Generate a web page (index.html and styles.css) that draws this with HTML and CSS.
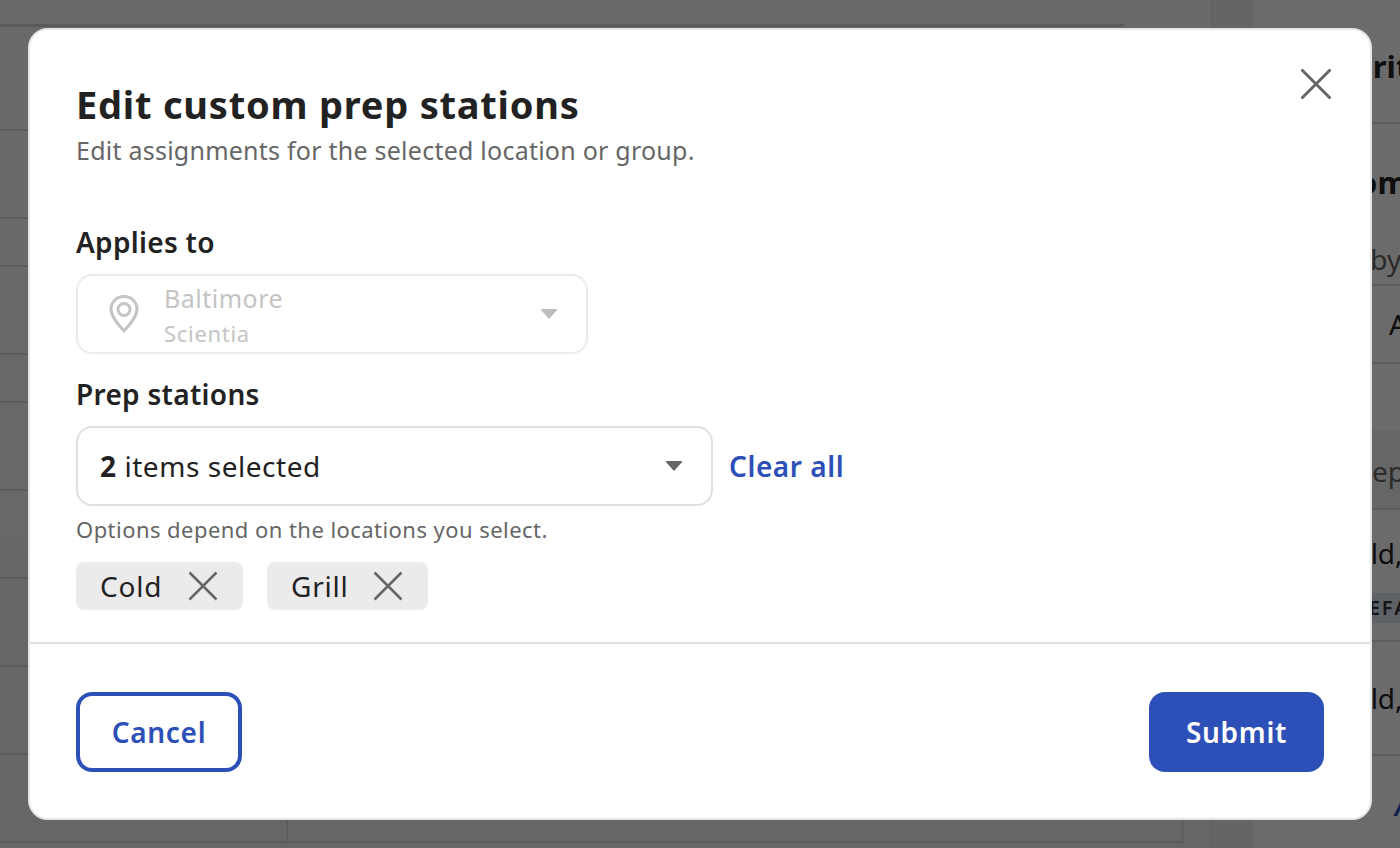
FILE: index.html
```html
<!DOCTYPE html>
<html lang="en">
<head>
<meta charset="utf-8">
<title>Edit custom prep stations</title>
<link rel="stylesheet" href="styles.css">
</head>
<body>
<div class="page">
  <main class="main">
    <div class="top-space"><div class="top-rule"></div></div>
    <div class="table">
      <div class="row tall"><div class="cell-a"></div><div class="cell-b"></div></div>
      <div class="row short"><div class="cell-a"></div><div class="cell-b"></div></div>
      <div class="row tall"><div class="cell-a"></div><div class="cell-b"></div></div>
      <div class="row short"><div class="cell-a"></div><div class="cell-b"></div></div>
      <div class="row tall"><div class="cell-a"></div><div class="cell-b"></div></div>
      <div class="row tall"><div class="cell-a"></div><div class="cell-b"></div></div>
      <div class="row tall"><div class="cell-a"></div><div class="cell-b"></div></div>
      <div class="row tall"><div class="cell-a"></div><div class="cell-b"></div></div>
      <div class="row tall"><div class="cell-a"></div><div class="cell-b"></div></div>
    </div>
  </main>
  <div class="gutter"></div>
  <aside class="side">
    <div class="side-row s1"><span class="side-title">Priority</span></div>
    <div class="side-row s2"><span class="side-title">Custom</span></div>
    <div class="side-row s3"><span class="side-muted">Sorted by</span></div>
    <div class="side-row s4"><span class="side-text">All</span></div>
    <div class="side-row s5"><span class="side-muted">Prep</span></div>
    <div class="side-row s6"><span class="side-text">Cold,</span><span class="side-chip">DEFAULT</span></div>
    <div class="side-row s7"><span class="side-text">Cold,</span></div>
    <div class="side-row s8"><span class="side-link">All</span></div>
  </aside>
</div>
<div class="scrim"></div>
<section class="modal">
  <button class="close" aria-label="Close">
    <svg viewBox="0 0 30 30" width="30" height="30"><path d="M1.500 1.500 28.500 28.500M28.500 1.500 1.500 28.500"/></svg>
  </button>
  <header class="head">
    <h1 class="title">Edit custom prep stations</h1>
    <p class="subtitle">Edit assignments for the selected location or group.</p>
  </header>
  <div class="body">
    <label class="label">Applies to</label>
    <div class="select disabled">
      <svg class="pin" viewBox="0 0 32 40" width="32" height="40"><path d="M16 2.500C8.300 2.500 3 8.300 3 15c0 8 7.500 16 13 22 5.500-6 13-14 13-22 0-6.700-5.300-12.500-13-12.500Z"/><circle cx="16" cy="15.500" r="6"/></svg>
      <div class="select-text">
        <span class="sel-main">Baltimore</span>
        <span class="sel-sub">Scientia</span>
      </div>
      <span class="caret pale"></span>
    </div>
    <label class="label second">Prep stations</label>
    <div class="select-line">
      <div class="select active">
        <span class="value"><b>2</b> items selected</span>
        <span class="caret"></span>
      </div>
      <a class="clear">Clear all</a>
    </div>
    <p class="help">Options depend on the locations you select.</p>
    <div class="chips">
      <span class="chip one">Cold<svg viewBox="0 0 30 30" width="30" height="30"><path d="M1.500 1.500 28.500 28.500M28.500 1.500 1.500 28.500"/></svg></span>
      <span class="chip two">Grill<svg viewBox="0 0 30 30" width="30" height="30"><path d="M1.500 1.500 28.500 28.500M28.500 1.500 1.500 28.500"/></svg></span>
    </div>
  </div>
  <footer class="foot">
    <button class="btn cancel">Cancel</button>
    <button class="btn submit">Submit</button>
  </footer>
</section>
</body>
</html>
```
FILE: styles.css
```css
* { box-sizing: border-box; }
html, body { margin: 0; height: 100%; overflow: hidden; }
body { font-family: "Noto Sans", "Liberation Sans", sans-serif; color: #222; background: #fff; }

.page { display: flex; height: 848px; background: #fff; }
.main { width: 1213px; flex: none; border-right: 2px solid #e6e6e6; background: linear-gradient(#fbfbfb, #f4f4f4); }
.top-space { height: 129px; padding-top: 24px; }
.top-rule { width: 1124px; height: 3px; background: #d6d6d6; }
.table { width: 1184px; border-top: 2px solid #dcdcdc; }
.row { display: grid; grid-template-columns: 288px 896px; border-bottom: 2px solid #dcdcdc; }
.row.tall { height: 88px; }
.row.short { height: 48px; }
.cell-a { border-right: 2px solid #dcdcdc; }
.cell-b { border-right: 2px solid #e2e2e2; }

.gutter { width: 40px; flex: none; background: #f0f0f0; }
.side { flex: 1; background: #fff; overflow: hidden; white-space: nowrap; }
.side-row { border-bottom: 2px solid #e0e0e0; padding-left: 40px; display: flex; flex-direction: column; justify-content: center; }
.s1 { height: 124px; padding-left: 58px; padding-top: 10px; }
.s2 { height: 122px; padding-left: 36px; align-items: flex-start; border-bottom: 0; }
.s2 .side-title { margin-top: -6px; }
.s3 { height: 40px; align-items: flex-start; padding-left: 23px; }
.s3 .side-muted { margin-top: -12px; }
.s4 { height: 78px; padding-left: 136px; }
.s5 { height: 146px; background: linear-gradient(#fff 66px, #f4f4f4 66px); padding-left: 91px; justify-content: flex-end; padding-bottom: 18px; }
.s6 { height: 132px; padding-left: 83px; align-items: flex-start; justify-content: flex-start; padding-top: 24px; }
.s7 { height: 114px; padding-left: 83px; }
.s8 { border-bottom: 0; padding-top: 30px; padding-left: 142px; }
.side-title { font-size: 31px; font-weight: 700; color: #222; }
.side-muted { font-size: 28px; color: #666; }
.side-text { font-size: 28px; color: #222; }
.side-link { font-size: 28px; font-weight: 600; color: #2d4fb8; font-style: italic; }
.side-chip { margin-top: 21px; margin-left: 6px; padding: 0 10px; background: #dfe6f1; color: #333; font-size: 20px; letter-spacing: 2px; font-weight: 600; line-height: 30px; }

.scrim { position: fixed; inset: 0; background: rgba(0, 0, 0, .58); }

.modal { position: fixed; left: 28px; top: 28px; width: 1344px; height: 792px; background: #fff; border: 2px solid #e6e6e6; border-radius: 20px; display: flex; flex-direction: column; }
.close { position: absolute; right: 39px; top: 39px; width: 30px; height: 30px; padding: 0; border: 0; background: none; }
svg path { fill: none; }
.close svg path { stroke: #666; stroke-width: 3; stroke-linecap: round; }

.head { padding: 51px 46px 0; }
.title { margin: 0; font-size: 38px; line-height: 46px; font-weight: 700; letter-spacing: .78px; color: #222; }
.subtitle { margin: 0; font-size: 25px; line-height: 46px; letter-spacing: .24px; color: #666; }
.body { padding: 46px 46px 0; flex: 1; }
.label { display: block; font-size: 28px; line-height: 46px; font-weight: 600; letter-spacing: .3px; color: #222; }
.label.second { margin-top: 17px; }
.select { display: flex; align-items: center; border: 2px solid #e0e0e0; border-radius: 16px; height: 80px; background: #fff; }
.select.disabled { width: 512px; margin-top: 9px; border-color: #ebebeb; padding: 0 28px 0 30px; }
.pin { flex: none; }
.pin path, .pin circle { fill: none; stroke: #c4c4c4; stroke-width: 3; }
.select-text { flex: 1; margin-left: 24px; padding-top: 4px; display: flex; flex-direction: column; }
.sel-main { font-size: 25px; line-height: 35px; letter-spacing: .5px; color: #c4c4c4; }
.sel-sub { font-size: 22px; line-height: 35px; letter-spacing: .7px; color: #c4c4c4; }
.caret { flex: none; width: 0; height: 0; border-left: 9px solid transparent; border-right: 9px solid transparent; border-top: 10px solid #666; border-radius: 2px; }
.caret.pale { border-top-color: #bdbdbd; }
.select-line { display: flex; align-items: center; margin-top: 9px; }
.select.active { width: 637px; padding: 0 28px 0 22px; justify-content: space-between; }
.value { font-size: 28px; letter-spacing: .55px; color: #222; }
.clear { margin-left: 16px; font-size: 28px; font-weight: 600; letter-spacing: .55px; color: #2d4fb8; }
.help { margin: 8px 0 0; font-size: 22px; line-height: 30px; letter-spacing: .45px; color: #666; }
.chips { display: flex; gap: 24px; margin-top: 18px; }
.chip { height: 48px; display: flex; align-items: center; justify-content: space-between; background: #ebebeb; border-radius: 8px; padding: 0 25px 0 24px; font-size: 28px; letter-spacing: .8px; color: #222; }
.chip.one { width: 167px; }
.chip.two { width: 161px; }
.chip svg path { stroke: #666; stroke-width: 2.500; }
.foot { border-top: 2px solid #e2e2e2; height: 176px; padding: 48px 46px 0; display: flex; justify-content: space-between; align-items: flex-start; }
.btn { height: 80px; border-radius: 16px; font: 600 28px "Noto Sans", sans-serif; letter-spacing: .7px; }
.cancel { width: 166px; background: #fff; border: 4px solid #2d4fb8; color: #2d4fb8; }
.submit { width: 175px; background: #2d4fb8; border: 0; color: #fff; }
```
